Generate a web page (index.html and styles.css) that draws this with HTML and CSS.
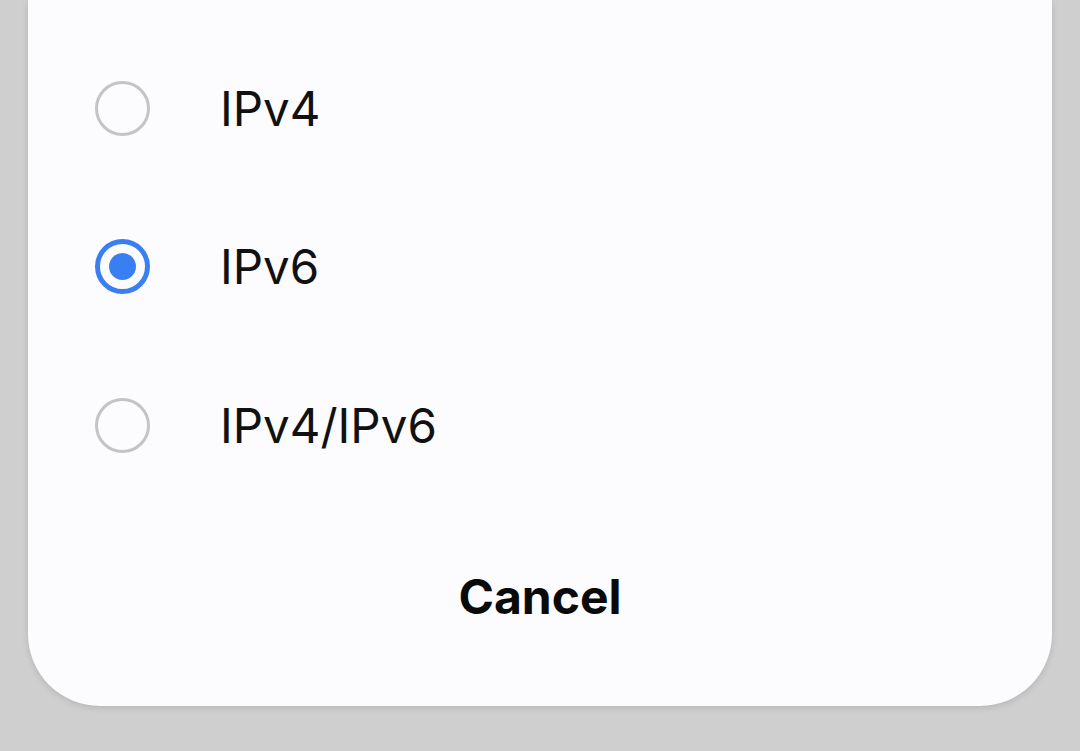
FILE: index.html
```html
<!DOCTYPE html>
<html>
<head>
<meta charset="utf-8">
<link rel="stylesheet" href="styles.css">
</head>
<body>
<div class="card">
  <div class="options">
    <div class="row"><span class="radio"></span><span class="label">IPv4</span></div>
    <div class="row"><span class="radio on"></span><span class="label">IPv6</span></div>
    <div class="row"><span class="radio"></span><span class="label">IPv4/IPv6</span></div>
  </div>
  <div class="cancel">Cancel</div>
</div>
</body>
</html>
```
FILE: styles.css
```css
html, body {
  margin: 0;
  padding: 0;
  background: #cfcfcf;
  width: 1080px;
  height: 751px;
  overflow: hidden;
  font-family: Inter, "Noto Sans", sans-serif;
}
.card {
  margin-left: 28px;
  width: 1024px;
  height: 706px;
  background: #fcfcfe;
  border-radius: 0 0 72px 72px;
  box-shadow: 0 2px 6px rgba(0,0,0,0.12);
  display: flex;
  flex-direction: column;
}
.options {
  padding-top: 29px;
}
.row {
  height: 158.5px;
  display: flex;
  align-items: center;
  padding-left: 67px;
}
.radio {
  box-sizing: border-box;
  width: 55px;
  height: 55px;
  border-radius: 50%;
  border: 3.5px solid #c4c4c4;
  flex: none;
  position: relative;
}
.radio.on {
  border: 5px solid #3a7ff2;
}
.radio.on::after {
  content: "";
  position: absolute;
  left: 50%;
  top: 50%;
  width: 27px;
  height: 27px;
  margin: -13.5px 0 0 -13.5px;
  border-radius: 50%;
  background: #3a7ff2;
}
.label {
  margin-left: 70px;
  font-size: 47.5px;
  color: #111;
  letter-spacing: 0;
}
.cancel {
  text-align: center;
  font-size: 48px;
  font-weight: 700;
  color: #0a0a0a;
  margin-top: 62px;
  line-height: 60px;
}
```
